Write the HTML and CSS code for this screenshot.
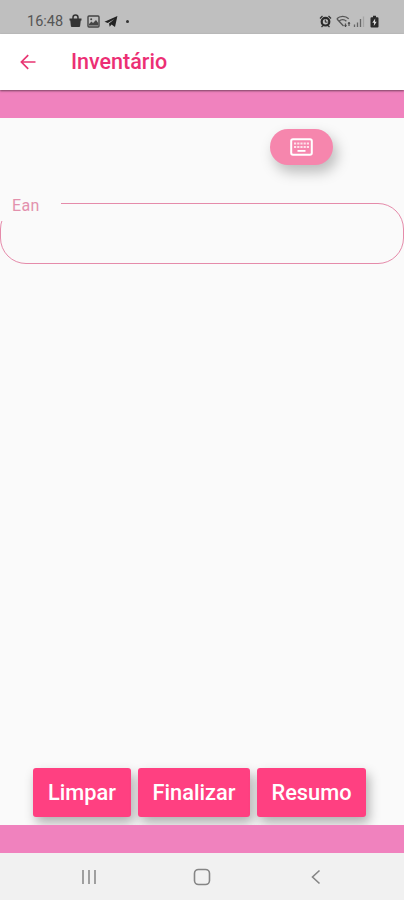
FILE: index.html
```html
<!DOCTYPE html>
<html lang="pt-BR">
<head>
  <meta charset="UTF-8">
  <meta name="viewport" content="width=device-width, initial-scale=1.0">
  <title>Inventário</title>
  <link rel="stylesheet" href="styles.css">
</head>
<body>

<div class="status-bar">
  <span class="clock">16:48</span>
  <svg class="icon-bag" width="13" height="14" viewBox="0 0 13 14">
    <path d="M4 5V3.6a2.5 2.5 0 0 1 5 0V5" fill="none" stroke="#333" stroke-width="1.5"/>
    <path d="M.5 4.5h12v2h-12zM1.2 6h10.6l-.7 6.2a1 1 0 0 1-1 .8H2.9a1 1 0 0 1-1-.8z" fill="#333"/>
  </svg>
  <svg class="icon-photo" width="13" height="13" viewBox="0 0 13 13">
    <rect x="1" y="1" width="11" height="11" rx="1" fill="none" stroke="#444" stroke-width="1.4"/>
    <path d="M2 10.5V9l2.5-2.5L6 8l3-3 2.2 3v2.5z" fill="#444"/>
    <circle cx="4.2" cy="4.2" r="1" fill="#444"/>
  </svg>
  <svg class="icon-send" width="14" height="13" viewBox="0 0 14 13">
    <path d="M.5 6.8 13.4 1 11 12 7.5 9.6 5.7 11.8 5 8.5 10.5 4 3.8 8z" fill="#222"/>
  </svg>
  <span class="dot"></span>
  <div class="status-right">
    <svg width="13" height="13" viewBox="0 0 13 13">
      <path d="M1 3.5 3.5 1M9.5 1 12 3.5M2.5 12 4 10.5M10.5 12 9 10.5" stroke="#333" stroke-width="1.3"/>
      <circle cx="6.5" cy="6.7" r="3.8" fill="#bfbfbf" stroke="#2b2b2b" stroke-width="2.2"/>
      <path d="M6.3 4.5v2.6h2.2" fill="none" stroke="#2b2b2b"/>
    </svg>
    <svg class="icon-wifi" width="16" height="13" viewBox="0 0 16 13">
      <path d="M.8 3.8C4 .6 9.5.6 12.7 3.8M3 6.2c2-2 5.3-2 7.4 0" fill="none" stroke="#555" stroke-width="1.3"/>
      <path d="M1 4l6.5 7M9.5 8.5V12M13 7v4" fill="none" stroke="#555" stroke-width="1.3"/>
      <path d="M8 10.2l1.5 1.8 1.5-1.8zM11.5 8.8 13 7l1.5 1.8z" fill="#444"/>
    </svg>
    <svg class="icon-signal" width="12" height="13" viewBox="0 0 12 13">
      <path d="M1.5 9.5V12M4.5 7.5V12M7.5 4V12" stroke="#666" stroke-width="1.3"/>
      <path d="M10.5 1.5V12" stroke="#a5a5a5" stroke-width="1.3"/>
    </svg>
    <svg class="icon-battery" width="9" height="13" viewBox="0 0 9 13">
      <path d="M3 .8h3v1.4h1.5a1 1 0 0 1 1 1V11.500a1 1 0 0 1-1 1h-6a1 1 0 0 1-1-1V3.200a1 1 0 0 1 1-1H3z" fill="#2b2b2b"/>
      <path d="M5.2 3.5 2.3 7.7h1.8L3.8 11l2.9-4.300H5z" fill="#ddd"/>
    </svg>
  </div>
</div>

<header class="app-bar">
  <svg width="16" height="16" viewBox="0 0 16 16">
    <path d="M15.5 8H1.5M8.2 1.2 1.4 8l6.8 6.8" fill="none" stroke="#e83572" stroke-width="1.7"/>
  </svg>
  <h1 class="title">Inventário</h1>
</header>

<main class="content">
  <button type="button" class="keyboard-button" aria-label="Teclado">
    <svg width="23" height="18" viewBox="0 0 23 18">
      <rect x="1.2" y="1.2" width="20.6" height="15.6" rx="1.8" fill="none" stroke="#fff" stroke-width="2"/>
      <path d="M4 5.5h15M4 9h15" stroke="#fde3eb" stroke-width="2" stroke-dasharray="2.2 1"/>
      <path d="M7.5 12.9h8" stroke="#fff" stroke-width="1.8"/>
    </svg>
  </button>

  <div class="field">
    <label class="field-label" for="ean">Ean</label>
    <input type="text" id="ean" class="field-input">
  </div>

  <div class="actions">
    <button type="button" class="action limpar">Limpar</button>
    <button type="button" class="action finalizar">Finalizar</button>
    <button type="button" class="action resumo">Resumo</button>
  </div>
</main>

<nav class="nav-bar">
  <svg width="16" height="16" viewBox="0 0 16 16">
    <path d="M2 1v14M8 1v14M14 1v14" stroke="#929292" stroke-width="1.7"/>
  </svg>
  <svg width="18" height="18" viewBox="0 0 18 18">
    <rect x="1.5" y="1.5" width="15" height="15" rx="4" fill="none" stroke="#858585" stroke-width="1.6"/>
  </svg>
  <svg width="16" height="16" viewBox="0 0 16 16">
    <path d="M12.5 1.500 5.500 8l7 6.500" fill="none" stroke="#858585" stroke-width="1.6"/>
  </svg>
</nav>

</body>
</html>
```

FILE: styles.css
```css
* {
  box-sizing: border-box;
}

body {
  margin: 0;
  height: 900px;
  display: flex;
  flex-direction: column;
  background-color: #fafafa;
  font-family: Roboto, "Liberation Sans", sans-serif;
  overflow: hidden;
}

svg {
  display: block;
  flex: none;
}

/* Barra de status */
.status-bar {
  height: 34px;
  display: flex;
  align-items: center;
  padding: 8px 25px 0 27px;
  background-color: #bfbfbf;
}

.clock {
  width: 42px;
  padding-top: 1px;
  font-size: 14.5px;
  line-height: 18px;
  color: #555;
}

.icon-photo {
  margin-left: 5px;
}

.icon-send {
  margin-left: 4px;
}

.dot {
  width: 3px;
  height: 3px;
  margin-left: 8px;
  border-radius: 50%;
  background-color: #333;
}

.status-right {
  display: flex;
  margin-left: auto;
}

.icon-wifi {
  margin-left: 4px;
}

.icon-signal {
  margin-left: 1px;
}

.icon-battery {
  margin-left: 5px;
}

/* Cabeçalho */
.app-bar {
  position: relative;
  height: 56px;
  display: flex;
  align-items: center;
  padding-left: 20px;
  background-color: #fff;
  box-shadow: 0 1px 2px rgba(0, 0, 0, 0.5);
}

.title {
  margin: 0 0 0 35px;
  font-size: 21.5px;
  font-weight: 500;
  line-height: 24px;
  color: #ec2f74;
}

/* Conteúdo */
.content {
  height: 763px;
  display: flex;
  flex-direction: column;
  border-top: 28px solid #f082be;
  border-bottom: 28px solid #f082be;
  overflow: hidden;
}

.keyboard-button {
  width: 63px;
  height: 36px;
  margin: 11px 71px 0 0;
  padding: 0;
  display: flex;
  flex: none;
  align-self: flex-end;
  align-items: center;
  justify-content: center;
  border: none;
  border-radius: 18px;
  background-color: #f686ad;
  box-shadow: 4px 7px 14px rgba(0, 0, 0, 0.26);
}

.field {
  position: relative;
  margin-top: 38px;
}

.field-input {
  display: block;
  width: 100%;
  height: 61px;
  padding: 0 24px;
  border: 1.5px solid #e58baa;
  border-radius: 26px;
  outline: none;
  background-color: transparent;
  font-size: 16px;
}

.field-label {
  position: absolute;
  top: -7px;
  left: 0;
  width: 61px;
  height: 25px;
  padding-left: 12px;
  background-color: #fafafa;
  font-size: 16px;
  line-height: 20px;
  letter-spacing: 0.3px;
  color: #e391ad;
}

.actions {
  display: flex;
  gap: 7px;
  margin: auto 0 8px 33px;
}

.action {
  height: 49px;
  padding: 0;
  border: none;
  border-radius: 3px;
  background-color: #ff4081;
  box-shadow: 3px 6px 12px rgba(0, 0, 0, 0.3);
  font-family: inherit;
  font-size: 21.8px;
  font-weight: 500;
  color: #fff;
}

.limpar {
  width: 98px;
}

.finalizar {
  width: 112px;
}

.resumo {
  width: 109px;
}

/* Navegação do sistema */
.nav-bar {
  height: 47px;
  display: flex;
  align-items: center;
  justify-content: space-between;
  padding: 1px 81px 0;
  background-color: #f1f1f1;
}
```
